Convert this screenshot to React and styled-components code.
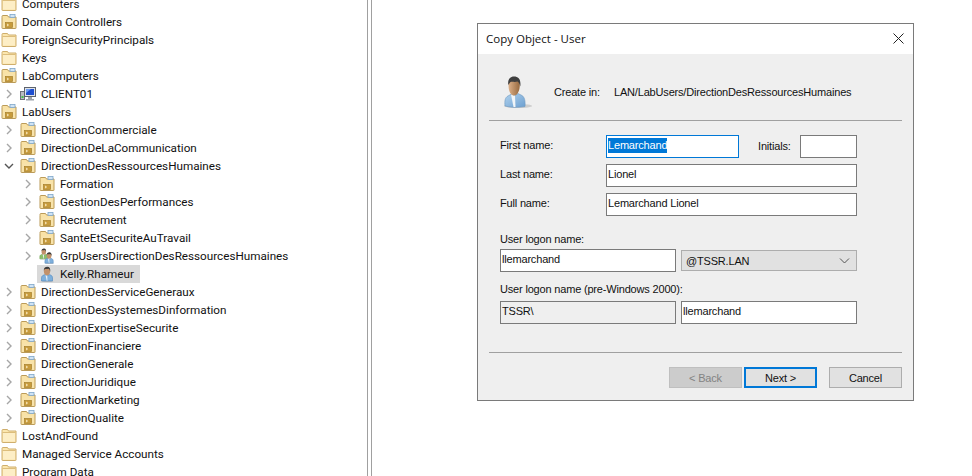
import React from 'react';
import styled, { createGlobalStyle } from 'styled-components';

const GlobalStyle = createGlobalStyle`
  html, body {
    margin: 0;
    padding: 0;
    height: 100%;
    background: #fff;
    overflow: hidden;
  }
`;

const FolderIcon = () => (
  <svg width="16" height="16" viewBox="0 0 16 16">
    <path d="M1 3.500 V14 a.5.5 0 0 0 .5.5 H14.500 a.5.5 0 0 0 .5-.5 V3 H7.500 L6.500 1.500 H2 a1 1 0 0 0 -1 1 Z" fill="#fbe6ae" stroke="#cfae6c" />
    <rect x="2" y="5" width="12" height="8.500" fill="#fdeec6" />
    <path d="M1.500 4.500 H14.500" stroke="#dcbd7c" />
  </svg>
);

const OuIcon = () => (
  <svg width="16" height="16" viewBox="0 0 16 16">
    <path d="M1 3.500 V14 a.5.5 0 0 0 .5.5 H14.500 a.5.5 0 0 0 .5-.5 V3 H7.500 L6.500 1.500 H2 a1 1 0 0 0 -1 1 Z" fill="#f9e2a6" stroke="#bb9b58" />
    <rect x="9" y=".5" width="5" height="3" fill="#cfe3f5" stroke="#7ea6c9" strokeWidth=".8" />
    <rect x="2.500" y="5.500" width="11" height="8" fill="#f8e3ac" />
    <rect x="4.500" y="8.500" width="7" height="5" fill="#c79b3c" stroke="#a57f2b" strokeWidth=".7" />
    <path d="M6 10 l1.500 1 -1.500 1" fill="none" stroke="#fff3cf" strokeWidth=".9" />
  </svg>
);

const ComputerIcon = () => (
  <svg width="16" height="16" viewBox="0 0 16 16">
    <rect x=".5" y="5.500" width="4" height="8" fill="#b9bcc2" stroke="#6d7178" />
    <rect x="1.500" y="10" width="2" height="2" fill="#49c04a" />
    <rect x="4.500" y="1.500" width="11" height="9" fill="#dfe3ea" stroke="#5d636c" />
    <rect x="6" y="3" width="8" height="6" fill="#1f4fd0" />
    <path d="M6 3 h5 l-5 4 Z" fill="#6d9bf0" />
    <path d="M8 11 h4 v2 h2 v1.500 H6 V13 h2 Z" fill="#9ea3ab" />
  </svg>
);

const PersonShape = ({ x = 0, y = 0, scale = 1, body = '#7fb0dc', shade = '#4f86bd' }) => (
  <g transform={`translate(${x} ${y}) scale(${scale})`}>
    <ellipse cx="8.500" cy="15.300" rx="6" ry=".8" fill="#b5b5b5" opacity=".7" />
    <path d="M2.500 15 V11.800 C2.500 9.800 4.500 9 6 8.600 L8 10 L10.300 8.600 C12 9 13.500 9.900 13.500 11.800 V15 Z" fill={body} stroke={shade} strokeWidth=".6" />
    <path d="M6.500 9 L7.800 15 H8.400 L8.300 10 Z" fill="#e9f0f7" />
    <ellipse cx="8" cy="5.200" rx="3.100" ry="4" fill="#c2916a" />
    <path d="M4.800 5 C4.500 2 6.300 .7 8.400 .7 C10.600 .7 11.600 2.500 11.200 5.500 C10.800 4 10.300 3 9.300 2.800 C7.800 3.300 6 3 5.600 3.200 C5.100 3.600 5 4.300 4.800 5 Z" fill="#3b3b3b" />
  </g>
);

const PersonIcon = () => (
  <svg width="16" height="16" viewBox="0 0 16 16">
    <PersonShape />
  </svg>
);

const GroupIcon = () => (
  <svg width="16" height="16" viewBox="0 0 16 16">
    <PersonShape x={-1} y={0} scale={0.72} body="#8cbf6a" shade="#5f9440" />
    <PersonShape x={4} y={3.800} scale={0.76} />
  </svg>
);

const BigPersonIcon = () => (
  <svg width="32" height="34" viewBox="0 0 32 34">
    <defs>
      <linearGradient id="bigFace" x1="0" y1="0" x2="1" y2="0">
        <stop offset="0" stopColor="#dcb089" />
        <stop offset="1" stopColor="#96693f" />
      </linearGradient>
      <linearGradient id="bigBody" x1="0" y1="0" x2="1" y2="1">
        <stop offset="0" stopColor="#b2d3ee" />
        <stop offset="1" stopColor="#6c9fd0" />
      </linearGradient>
    </defs>
    <ellipse cx="18" cy="31" rx="14" ry="2" fill="#c4c4c4" opacity=".8" />
    <path d="M5 31 C4.500 26 5 22.500 8 21 L11.500 19 L14.500 21 L18 18.500 L22 20.500 C24.500 22 25.500 26 25 31.500 C19 32.800 10 32.500 5 31 Z" fill="url(#bigBody)" stroke="#6b97bf" strokeWidth=".6" />
    <path d="M11 19.500 L13.500 32 H15.500 L15 21 Z" fill="#f1f5f8" />
    <path d="M8.500 10 C8.500 16 10.500 20.500 14 20.500 C17.500 20.500 19.800 15.500 19.800 10 C19.800 6 17.500 4 14 4 C11 4 8.500 6 8.500 10 Z" fill="url(#bigFace)" />
    <path d="M8.300 10 C7.500 4.500 10 1.500 14 1.500 C18.500 1.500 21.200 4.500 20.300 11.500 C19.700 9 19 7.500 17.500 6.500 C15 7.300 12.500 6.500 10.500 7 C9.500 8 9 9 8.300 10 Z" fill="#3f3f3f" />
  </svg>
);

const TREE = [
  { label: 'Computers', depth: 0, icon: 'folder' },
  { label: 'Domain Controllers', depth: 0, icon: 'ou' },
  { label: 'ForeignSecurityPrincipals', depth: 0, icon: 'folder' },
  { label: 'Keys', depth: 0, icon: 'folder' },
  { label: 'LabComputers', depth: 0, icon: 'ou' },
  { label: 'CLIENT01', depth: 1, icon: 'computer', arrow: 'closed' },
  { label: 'LabUsers', depth: 0, icon: 'ou' },
  { label: 'DirectionCommerciale', depth: 1, icon: 'ou', arrow: 'closed' },
  { label: 'DirectionDeLaCommunication', depth: 1, icon: 'ou', arrow: 'closed' },
  { label: 'DirectionDesRessourcesHumaines', depth: 1, icon: 'ou', arrow: 'open' },
  { label: 'Formation', depth: 2, icon: 'ou', arrow: 'closed' },
  { label: 'GestionDesPerformances', depth: 2, icon: 'ou', arrow: 'closed' },
  { label: 'Recrutement', depth: 2, icon: 'ou', arrow: 'closed' },
  { label: 'SanteEtSecuriteAuTravail', depth: 2, icon: 'ou', arrow: 'closed' },
  { label: 'GrpUsersDirectionDesRessourcesHumaines', depth: 2, icon: 'group', arrow: 'closed' },
  { label: 'Kelly.Rhameur', depth: 2, icon: 'person', selected: true },
  { label: 'DirectionDesServiceGeneraux', depth: 1, icon: 'ou', arrow: 'closed' },
  { label: 'DirectionDesSystemesDinformation', depth: 1, icon: 'ou', arrow: 'closed' },
  { label: 'DirectionExpertiseSecurite', depth: 1, icon: 'ou', arrow: 'closed' },
  { label: 'DirectionFinanciere', depth: 1, icon: 'ou', arrow: 'closed' },
  { label: 'DirectionGenerale', depth: 1, icon: 'ou', arrow: 'closed' },
  { label: 'DirectionJuridique', depth: 1, icon: 'ou', arrow: 'closed' },
  { label: 'DirectionMarketing', depth: 1, icon: 'ou', arrow: 'closed' },
  { label: 'DirectionQualite', depth: 1, icon: 'ou', arrow: 'closed' },
  { label: 'LostAndFound', depth: 0, icon: 'folder' },
  { label: 'Managed Service Accounts', depth: 0, icon: 'folder' },
  { label: 'Program Data', depth: 0, icon: 'folder' },
];

const ICONS = {
  folder: FolderIcon,
  ou: OuIcon,
  computer: ComputerIcon,
  person: PersonIcon,
  group: GroupIcon,
};

const ChevronBox = styled.svg`
  width: 10px;
  height: 10px;
  margin-right: 6px;
  flex-shrink: 0;
`;

const Chevron = ({ open }) => (
  <ChevronBox viewBox="0 0 10 10">
    <path
      d={open ? 'M1 3 L5 7 L9 3' : 'M3 1 L7 5 L3 9'}
      fill="none"
      stroke={open ? '#555' : '#a6a6a6'}
      strokeWidth="1.400"
    />
  </ChevronBox>
);

const Page = styled.div`
  display: flex;
  width: 972px;
  height: 476px;
  overflow: hidden;
  background: #fff;
`;

const TreePane = styled.div`
  width: 367px;
  margin-top: -5px;
  flex-shrink: 0;
  font-family: "Roboto", sans-serif;
  font-size: 11.700px;
  color: #111;
`;

const Row = styled.div`
  display: flex;
  align-items: center;
  height: 18px;
`;

const Indent = styled.div`
  width: ${props => 1 + props.$depth * 19}px;
  flex-shrink: 0;
  display: flex;
  justify-content: flex-end;
`;

const RowIcon = styled.div`
  width: 16px;
  height: 16px;
  flex-shrink: 0;
`;

const RowLabel = styled.div`
  margin-left: 5px;
  white-space: nowrap;
`;

const RowBody = styled.div`
  display: flex;
  align-items: center;
  height: 18px;
  padding-right: 6px;
  margin-left: -2px;
  padding-left: 2px;
  background: ${props => (props.$selected ? '#d9d9d9' : 'transparent')};
`;

const Splitter = styled.div`
  width: 3px;
  flex-shrink: 0;
  border-left: 1px solid #a0a0a0;
  border-right: 1px solid #a0a0a0;
`;

const RightPane = styled.div`
  flex: 1;
  padding: 23px 0 0 105px;
`;

const Dialog = styled.div`
  width: 435px;
  height: 376px;
  border: 1px solid #7a7a7a;
  background: #efefef;
  display: flex;
  flex-direction: column;
  font-family: "Liberation Sans", sans-serif;
  font-size: 11px;
  letter-spacing: -0.18px;
  color: #111;
`;

const TitleBar = styled.div`
  box-sizing: border-box;
  height: 30px;
  flex-shrink: 0;
  background: #fff;
  display: flex;
  align-items: center;
  justify-content: space-between;
  padding: 0 9px 2px 8px;
  font-family: "Open Sans", sans-serif;
  font-size: 11.500px;
  letter-spacing: 0;
`;

const CloseIcon = () => (
  <svg width="11" height="11" viewBox="0 0 11 11">
    <path d="M.5 .5 L10.500 10.500 M10.500 .5 L.5 10.500" stroke="#222" strokeWidth="1" />
  </svg>
);

const Content = styled.div`
  flex: 1;
  padding: 0 11px;
  display: flex;
  flex-direction: column;
`;

const CreateRow = styled.div`
  box-sizing: border-box;
  height: 67px;
  display: flex;
  align-items: center;
  padding: 10px 0 0 11px;
  border-bottom: 1px solid #a0a0a0;
`;

const CreateLabel = styled.div`
  margin-left: 22px;
  width: 60px;
`;

const Form = styled.div`
  padding: 14px 0 0 11px;
  height: 232px;
  box-sizing: border-box;
  border-bottom: 1px solid #a0a0a0;
  display: flex;
  flex-direction: column;
`;

const FieldRow = styled.div`
  display: flex;
  align-items: center;
  margin-bottom: 6px;
`;

const FieldLabel = styled.div`
  width: 106px;
  flex-shrink: 0;
  padding-bottom: 3px;
`;

const InitialsLabel = styled.div`
  margin-left: 19px;
  width: 42px;
  padding-bottom: 2px;
`;

const Field = styled.div`
  box-sizing: border-box;
  height: 23px;
  width: ${props => props.$width}px;
  flex-shrink: 0;
  padding: 2px 1px 0;
  line-height: 15px;
  white-space: nowrap;
  background: ${props => (props.$disabled ? '#efefef' : '#fff')};
  border: 1px solid ${props => (props.$focused ? '#0078d7' : '#7a7a7a')};
`;

const Selected = styled.span`
  display: inline-block;
  background: #0078d7;
  color: #fff;
`;

const GroupLabel = styled.div`
  height: 15px;
  margin-top: 10px;
  margin-bottom: ${props => props.$bottom}px;
  line-height: 15px;
`;

const LogonRow = styled.div`
  display: flex;
  align-items: center;
  gap: 5px;
`;

const Select = styled.div`
  box-sizing: border-box;
  width: 176px;
  height: 21px;
  display: flex;
  align-items: center;
  justify-content: space-between;
  padding: 0 6px 0 4px;
  background: #e1e1e1;
  border: 1px solid #adadad;
`;

const Buttons = styled.div`
  display: flex;
  justify-content: flex-end;
  padding-top: 14px;
`;

const Button = styled.div`
  box-sizing: border-box;
  width: 73px;
  height: 21px;
  margin-left: ${props => props.$gap || 0}px;
  display: flex;
  align-items: center;
  justify-content: center;
  background: ${props => (props.$disabled ? '#cccccc' : '#e1e1e1')};
  color: ${props => (props.$disabled ? '#838383' : '#111')};
  border: ${props => (props.$primary ? '2px solid #0078d7' : props.$disabled ? '1px solid #bfbfbf' : '1px solid #adadad')};
`;

const TreeRow = ({ item }) => {
  const Icon = ICONS[item.icon];
  return (
    <Row>
      <Indent $depth={item.depth}>
        {item.arrow && <Chevron open={item.arrow === 'open'} />}
      </Indent>
      <RowBody $selected={item.selected}>
        <RowIcon>
          <Icon />
        </RowIcon>
        <RowLabel>{item.label}</RowLabel>
      </RowBody>
    </Row>
  );
};

export default function App() {
  return (
    <Page>
      <GlobalStyle />
      <TreePane>
        {TREE.map(item => (
          <TreeRow key={item.label} item={item} />
        ))}
      </TreePane>
      <Splitter />
      <RightPane>
        <Dialog>
          <TitleBar>
            <span>Copy Object - User</span>
            <CloseIcon />
          </TitleBar>
          <Content>
            <CreateRow>
              <BigPersonIcon />
              <CreateLabel>Create in:</CreateLabel>
              <span>LAN/LabUsers/DirectionDesRessourcesHumaines</span>
            </CreateRow>
            <Form>
              <FieldRow>
                <FieldLabel>First name:</FieldLabel>
                <Field $width={133} $focused>
                  <Selected>Lemarchand</Selected>
                </Field>
                <InitialsLabel>Initials:</InitialsLabel>
                <Field $width={57} />
              </FieldRow>
              <FieldRow>
                <FieldLabel>Last name:</FieldLabel>
                <Field $width={251}>Lionel</Field>
              </FieldRow>
              <FieldRow>
                <FieldLabel>Full name:</FieldLabel>
                <Field $width={251}>Lemarchand Lionel</Field>
              </FieldRow>
              <GroupLabel $bottom={2}>User logon name:</GroupLabel>
              <LogonRow>
                <Field $width={176}>llemarchand</Field>
                <Select>
                  <span>@TSSR.LAN</span>
                  <svg width="11" height="6" viewBox="0 0 11 6">
                    <path d="M1 .5 L5.500 5 L10 .5" fill="none" stroke="#555" />
                  </svg>
                </Select>
              </LogonRow>
              <GroupLabel $bottom={4}>User logon name (pre-Windows 2000):</GroupLabel>
              <LogonRow>
                <Field $width={176} $disabled>TSSR\</Field>
                <Field $width={176}>llemarchand</Field>
              </LogonRow>
            </Form>
            <Buttons>
              <Button $disabled>&lt; Back</Button>
              <Button $primary $gap={2}>Next &gt;</Button>
              <Button $gap={12}>Cancel</Button>
            </Buttons>
          </Content>
        </Dialog>
      </RightPane>
    </Page>
  );
}
